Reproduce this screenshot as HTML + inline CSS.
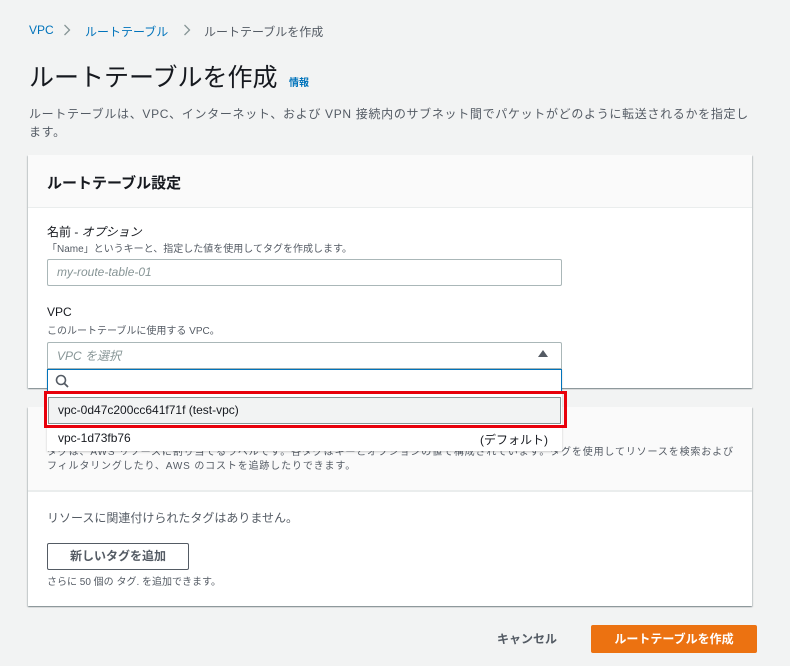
<!DOCTYPE html>
<html><head><meta charset="utf-8"><style>
*{margin:0;padding:0;box-sizing:border-box}
body{width:790px;height:666px;background:#f2f3f3;font-family:"Liberation Sans","Noto Sans CJK JP",sans-serif;color:#16191f;position:relative;overflow:hidden}
.a{position:absolute;white-space:nowrap}
.panel{position:absolute;background:#fff;box-shadow:0 1px 1px rgba(0,28,36,.3),1px 1px 1px rgba(0,28,36,.15),-1px 1px 1px rgba(0,28,36,.15)}
.s{font-size:10px;color:#545b64}
</style></head><body>
<div class="a" style="left:29px;top:23px;font-size:12px;color:#0073bb">VPC</div>
<svg class="a" style="left:63px;top:24px" width="8" height="12" viewBox="0 0 8 12"><path d="M1.5 1L6.5 6L1.5 11" fill="none" stroke="#879596" stroke-width="1.3"/></svg>
<div class="a" style="left:85px;top:23px;font-size:12px;color:#0073bb">ルートテーブル</div>
<svg class="a" style="left:183px;top:24px" width="8" height="12" viewBox="0 0 8 12"><path d="M1.5 1L6.5 6L1.5 11" fill="none" stroke="#879596" stroke-width="1.3"/></svg>
<div class="a" style="left:204px;top:23px;font-size:12px;color:#545b64">ルートテーブルを作成</div>
<div class="a" style="left:29px;top:58px;font-size:25px;color:#16191f">ルートテーブルを作成</div>
<div class="a" style="left:289px;top:74px;font-size:10px;font-weight:bold;color:#0073bb">情報</div>
<div class="a" style="left:29px;top:105px;font-size:12px;color:#545b64;line-height:18px;letter-spacing:0.68px">ルートテーブルは、VPC、インターネット、および VPN 接続内のサブネット間でパケットがどのように転送されるかを指定し<br>ます。</div>

<div class="panel" style="left:28px;top:155px;width:724px;height:233px">
 <div style="height:53px;background:#fafafa;border-bottom:1px solid #eaeded"></div>
 <div class="a" style="left:19px;top:17px;font-size:15px;font-weight:bold">ルートテーブル設定</div>
 <div class="a" style="left:19px;top:68px;font-size:12px">名前 - <i>オプション</i></div>
 <div class="a s" style="left:19px;top:85px">「Name」というキーと、指定した値を使用してタグを作成します。</div>
 <div class="a" style="left:19px;top:104px;width:515px;height:27px;border:1px solid #aab7b8;border-radius:2px"></div>
 <div class="a" style="left:29px;top:110px;font-size:12px;color:#879596;font-style:italic">my-route-table-01</div>
 <div class="a" style="left:19px;top:150px;font-size:12px">VPC</div>
 <div class="a s" style="left:19px;top:167px">このルートテーブルに使用する VPC。</div>
</div>

<div class="panel" style="left:28px;top:407px;width:724px;height:199px">
 <div style="height:85px;background:#fafafa;border-bottom:2px solid #eaeded"></div>
 <div class="a s" style="left:19px;top:39px;line-height:14px;letter-spacing:0.85px">タグは、AWS リソースに割り当てるラベルです。各タグはキーとオプションの値で構成されています。タグを使用してリソースを検索および<br>フィルタリングしたり、AWS のコストを追跡したりできます。</div>
 <div class="a" style="left:19px;top:102px;font-size:12px;color:#545b64">リソースに関連付けられたタグはありません。</div>
 <div class="a" style="left:19px;top:136px;width:142px;height:27px;border:1px solid #545b64;border-radius:2px;font-size:12px;font-weight:bold;color:#545b64;text-align:center;line-height:25px">新しいタグを追加</div>
 <div class="a s" style="left:19px;top:166px">さらに 50 個の タグ. を追加できます。</div>
</div>

<!-- dropdown -->
<div class="a" style="left:47px;top:342px;width:515px;height:27px;background:#fff;border:1px solid #aab7b8;border-radius:2px 2px 0 0"></div>
<div class="a" style="left:57px;top:347px;font-size:12px;color:#879596;font-style:italic">VPC を選択</div>
<div class="a" style="left:538px;top:350px;width:0;height:0;border-left:5px solid transparent;border-right:5px solid transparent;border-bottom:7px solid #545b64"></div>
<div class="a" style="left:47px;top:369px;width:515px;height:82px;background:#fff;box-shadow:0 1px 2px rgba(0,0,0,.2)"></div>
<div class="a" style="left:47px;top:369px;width:515px;height:24px;border:1px solid #0073bb"></div>
<svg class="a" style="left:55px;top:374px" width="14" height="14" viewBox="0 0 14 14"><circle cx="6" cy="6" r="4.5" fill="none" stroke="#545b64" stroke-width="1.6"/><path d="M9.2 9.2L13 13" stroke="#545b64" stroke-width="1.8"/></svg>
<div class="a" style="left:48px;top:397px;width:513px;height:27px;background:#f2f3f3;border:1px solid #879596"></div>
<div class="a" style="left:58px;top:403px;font-size:12px">vpc-0d47c200cc641f71f (test-vpc)</div>
<div class="a" style="left:58px;top:431px;font-size:12px">vpc-1d73fb76</div>
<div class="a" style="left:480px;top:431px;font-size:12px">(デフォルト)</div>
<div class="a" style="left:44px;top:391px;width:523px;height:37px;border:3px solid #e8000b"></div>

<div class="a" style="left:497px;top:630px;font-size:12px;font-weight:bold;color:#545b64">キャンセル</div>
<div class="a" style="left:591px;top:625px;width:166px;height:28px;background:#ec7211;border-radius:2px;color:#fff;font-size:12px;font-weight:bold;text-align:center;line-height:28px">ルートテーブルを作成</div>
</body></html>
